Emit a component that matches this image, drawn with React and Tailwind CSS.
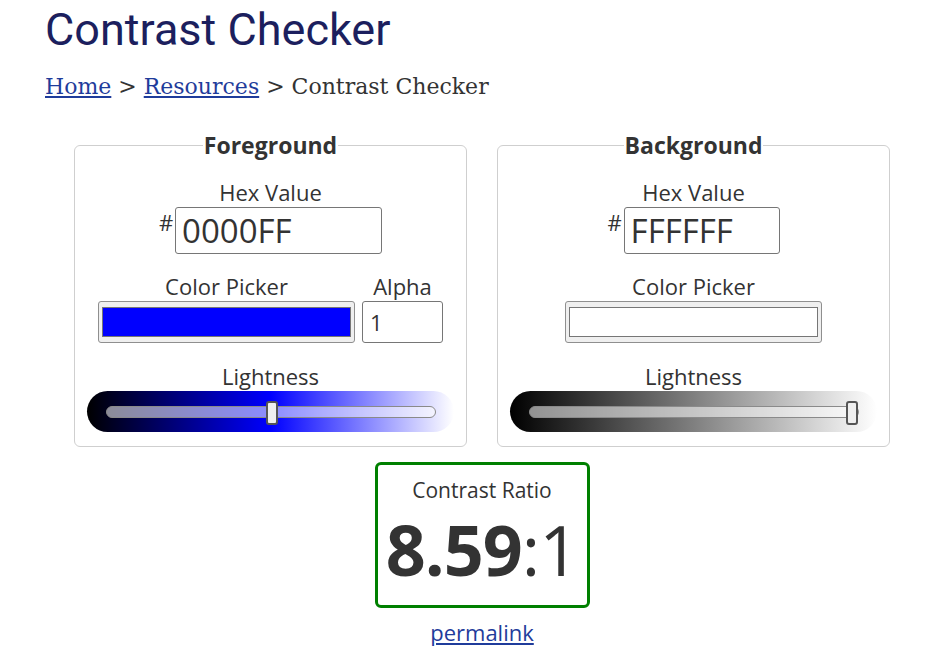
import React from "react";

const body = { fontFamily: '"Open Sans", "Noto Sans", sans-serif' };

function HexRow({ value, width }) {
    return (
        <div className="flex justify-center items-start">
            <span className="text-[22px] leading-[30px] mr-[2px]">#</span>
            <input
                className={`h-[47px] ${width} border border-[#767676] rounded-[3px] bg-white px-[6px] text-[33px] text-[#333] outline-none`}
                defaultValue={value}
                readOnly
            />
        </div>
    );
}

function Swatch({ color }) {
    return (
        <div className="h-[42px] w-[257px] rounded-[3px] border border-[#8f8f8f] bg-[#efefef] px-[3px] py-[5px]">
            <div className={`h-full w-full border border-[#767676] ${color}`}></div>
        </div>
    );
}

function Lightness({ gradient, pos }) {
    return (
        <div className={`relative h-[41px] w-[367px] rounded-full ${gradient}`}>
            <div className="absolute left-[19px] right-[18px] top-[15px] h-[12px] rounded-full border border-[#8a8a8a] bg-white/55"></div>
            <div
                className="absolute top-[10px] h-[24px] w-[12px] rounded-[3px] border-2 border-[#555] bg-[#efefef]"
                style={{ left: pos }}
            ></div>
        </div>
    );
}

function Panel({ title, children }) {
    return (
        <fieldset className="w-[393px] rounded-[6px] border border-[#cfcfcf] pb-[14px]">
            <legend className="mx-auto px-[1px] text-[23px] leading-[28px] font-bold text-[#333]">
                {title}
            </legend>
            {children}
        </fieldset>
    );
}

export default function App() {
    return (
        <div className="min-h-screen bg-white text-[#333]" style={body}>
            <h1
                className="pl-[45px] pt-[3px] text-[45px] leading-[1.2] text-[#1c1f5e]"
                style={{ fontFamily: "Roboto, sans-serif" }}
            >
                Contrast Checker
            </h1>
            <div
                className="pl-[45px] mt-[15px] text-[22px] leading-[30px] text-[#333]"
                style={{ fontFamily: '"DejaVu Serif", serif' }}
            >
                <a href="#" className="text-[#1f3c9b] underline">Home</a>
                {" > "}
                <a href="#" className="text-[#1f3c9b] underline">Resources</a>
                {" > Contrast Checker"}
            </div>

            <div className="ml-[74px] w-[816px] mt-[29px]">
                <div className="flex justify-between">
                    <Panel title="Foreground">
                        <div className="mt-[18px] text-center text-[22px] leading-[30px]">Hex Value</div>
                        <HexRow value="0000FF" width="w-[207px]" />
                        <div className="mt-[17px] flex justify-center gap-[7px]">
                            <div className="flex flex-col items-center">
                                <span className="text-[22px] leading-[30px]">Color Picker</span>
                                <Swatch color="bg-[#0000ff]" />
                            </div>
                            <div className="flex flex-col items-center">
                                <span className="text-[22px] leading-[30px]">Alpha</span>
                                <input
                                    className="h-[42px] w-[81px] rounded-[3px] border border-[#767676] px-[7px] text-[22px] text-[#333] outline-none"
                                    defaultValue="1"
                                    readOnly
                                />
                            </div>
                        </div>
                        <div className="mt-[18px] text-center text-[22px] leading-[30px]">Lightness</div>
                        <div className="flex justify-center">
                            <Lightness
                                gradient="bg-[linear-gradient(to_right,#000_0%,#0000ff_50%,#fff_100%)]"
                                pos="179px"
                            />
                        </div>
                    </Panel>

                    <Panel title="Background">
                        <div className="mt-[18px] text-center text-[22px] leading-[30px]">Hex Value</div>
                        <HexRow value="FFFFFF" width="w-[156px]" />
                        <div className="mt-[17px] flex flex-col items-center">
                            <span className="text-[22px] leading-[30px]">Color Picker</span>
                            <Swatch color="bg-white" />
                        </div>
                        <div className="mt-[18px] text-center text-[22px] leading-[30px]">Lightness</div>
                        <div className="flex justify-center">
                            <Lightness
                                gradient="bg-[linear-gradient(to_right,#000_0%,#fff_100%)]"
                                pos="336px"
                            />
                        </div>
                    </Panel>
                </div>

                <div className="mt-[15px] flex flex-col items-center">
                    <div className="w-[215px] h-[146px] rounded-[6px] border-[3px] border-[#008000] flex flex-col items-center">
                        <div className="mt-[13px] text-[21px] leading-[24px]">Contrast Ratio</div>
                        <div className="text-[70px] leading-[95px] tracking-[-1px]">
                            <span className="font-bold">8.59</span>:1
                        </div>
                    </div>
                    <a href="#" className="mt-[9px] text-[22px] leading-[30px] text-[#1f3c9b] underline">
                        permalink
                    </a>
                </div>
            </div>
        </div>
    );
}
